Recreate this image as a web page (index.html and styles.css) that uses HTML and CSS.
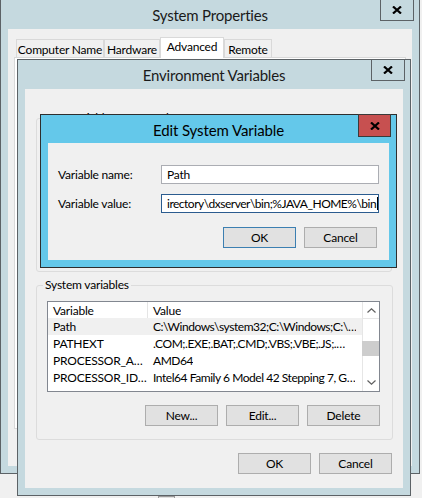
FILE: index.html
```html
<!DOCTYPE html>
<html>
<head>
<meta charset="utf-8">
<title>System Properties - Edit System Variable</title>
<link rel="stylesheet" href="styles.css">
</head>
<body>
<div class="desk">
  <div class="peek-btn"></div>

  <section class="win sysprops">
    <header class="titlebar">
      <span class="title">System Properties</span>
      <span class="close">
        <svg width="10" height="8" viewBox="0 0 10 8"><path d="M1 0.5 L9 7.5 M9 0.5 L1 7.5" stroke="#000" stroke-width="2.2" fill="none"/></svg>
      </span>
    </header>
    <div class="client sp-client">
      <div class="tabs">
        <span class="tab t-cn">Computer Name</span>
        <span class="tab t-hw">Hardware</span>
        <span class="tab t-adv sel">Advanced</span>
        <span class="tab t-rm">Remote</span>
      </div>
      <div class="tabpanel"></div>
    </div>
  </section>

  <section class="win env">
    <header class="titlebar">
      <span class="title">Environment Variables</span>
      <span class="close">
        <svg width="10" height="8" viewBox="0 0 10 8"><path d="M1 0.5 L9 7.5 M9 0.5 L1 7.5" stroke="#000" stroke-width="2.2" fill="none"/></svg>
      </span>
    </header>
    <div class="client env-client">
      <fieldset class="group user-group">
        <legend>User variables for Moonlemon</legend>
        <div class="user-body"></div>
      </fieldset>
      <fieldset class="group sys-group">
        <legend>System variables</legend>
        <div class="listview">
          <div class="lv-table">
            <div class="lv-row lv-head"><span class="c1">Variable</span><span class="c2 hdiv">Value</span></div>
            <div class="lv-row hl"><span class="c1">Path</span><span class="c2">C:\Windows\system32;C:\Windows;C:\…</span></div>
            <div class="lv-row"><span class="c1">PATHEXT</span><span class="c2">.COM;.EXE;.BAT;.CMD;.VBS;.VBE;.JS;.…</span></div>
            <div class="lv-row"><span class="c1">PROCESSOR_A…</span><span class="c2">AMD64</span></div>
            <div class="lv-row"><span class="c1">PROCESSOR_ID…</span><span class="c2">Intel64 Family 6 Model 42 Stepping 7, G…</span></div>
          </div>
          <div class="vscroll">
            <div class="sb-btn sb-up">
              <svg width="9" height="5" viewBox="0 0 9 5"><path d="M0.5 4.5 L4.5 0.8 L8.5 4.5" stroke="#606060" stroke-width="1.2" fill="none"/></svg>
            </div>
            <div class="sb-track"><div class="sb-thumb"></div></div>
            <div class="sb-btn sb-down">
              <svg width="9" height="5" viewBox="0 0 9 5"><path d="M0.5 0.5 L4.5 4.2 L8.5 0.5" stroke="#606060" stroke-width="1.2" fill="none"/></svg>
            </div>
          </div>
        </div>
        <div class="btn-row">
          <span class="btn">New...</span>
          <span class="btn">Edit...</span>
          <span class="btn">Delete</span>
        </div>
      </fieldset>
      <div class="btn-row dlg-btns">
        <span class="btn">OK</span>
        <span class="btn">Cancel</span>
      </div>
    </div>
  </section>

  <section class="win edit">
    <header class="titlebar">
      <span class="title">Edit System Variable</span>
      <span class="close red">
        <svg width="10" height="8" viewBox="0 0 10 8"><path d="M1 0.5 L9 7.5 M9 0.5 L1 7.5" stroke="#000" stroke-width="2.2" fill="none"/></svg>
      </span>
    </header>
    <div class="client edit-client">
      <div class="form">
        <label class="lbl">Variable name:</label>
        <div class="field">Path</div>
        <label class="lbl">Variable value:</label>
        <div class="field focus"><span class="val">irectory\dxserver\bin;%JAVA_HOME%\bin</span><span class="caret"></span></div>
      </div>
      <div class="btn-row edit-btns">
        <span class="btn default">OK</span>
        <span class="btn">Cancel</span>
      </div>
    </div>
  </section>
</div>
</body>
</html>
```

FILE: styles.css
```css
html, body {
  margin: 0;
  padding: 0;
}
body {
  background: #f0f0f0;
  font-family: Lato, "Noto Sans", sans-serif;
  font-size: 12px;
  letter-spacing: -0.2px;
  color: #000;
}
.desk {
  position: relative;
  width: 422px;
  height: 498px;
  overflow: hidden;
}
.peek-btn {
  position: absolute;
  left: 158px;
  top: 496px;
  width: 17px;
  height: 6px;
  background: #e1e1e1;
  border: 1px solid #9a9a9a;
  box-sizing: border-box;
}

/* windows */
.win {
  position: absolute;
  box-sizing: border-box;
  border: 1px solid #5c6266;
  background: #c5d9df;
  padding: 0 7px 7px;
  display: flex;
  flex-direction: column;
}
.titlebar {
  position: relative;
  height: 29px;
  flex: none;
  display: flex;
  align-items: center;
  justify-content: center;
}
.title {
  font-size: 15px;
  color: #1a1a1a;
  padding-top: 1px;
  white-space: nowrap;
}
.close {
  position: absolute;
  top: 0;
  right: -2px;
  width: 34px;
  height: 21px;
  box-sizing: border-box;
  border: 1px solid #5c6266;
  border-top: none;
  display: flex;
  align-items: center;
  justify-content: center;
}
.client {
  flex: 1;
  background: #f0f0f0;
  position: relative;
  box-sizing: border-box;
}

/* System Properties */
.sysprops {
  left: 0;
  top: -1px;
  width: 420px;
  height: 475px;
}
.sp-client {
  padding: 8px 0 0 6px;
}
.tabs {
  display: flex;
  align-items: flex-end;
  height: 20px;
  padding-left: 2px;
  position: relative;
  z-index: 1;
}
.tab {
  box-sizing: border-box;
  height: 18px;
  border: 1px solid #d9d9d9;
  border-bottom: none;
  background: #f0f0f0;
  display: flex;
  align-items: center;
  justify-content: center;
  padding-top: 1px;
  white-space: nowrap;
}
.t-cn { width: 88px; }
.t-hw { width: 56px; }
.t-adv { width: 64px; }
.t-rm { width: 48px; }
.tab.sel {
  height: 21px;
  margin-bottom: -1px;
  background: #fff;
  padding-top: 0;
  padding-bottom: 3px;
}
.tabpanel {
  width: 392px;
  height: 372px;
  box-sizing: border-box;
  border: 1px solid #d9d9d9;
  background: #fff;
}

/* Environment Variables */
.env {
  left: 17px;
  top: 59px;
  width: 394px;
  height: 437px;
}
.env-client {
  padding: 22px 10px 0 11px;
  display: flex;
  flex-direction: column;
}
.group {
  margin: 0;
  padding: 0 12px 13px 10px;
  border: 1px solid #dcdcdc;
  border-radius: 3px;
  min-width: 0;
}
.group legend {
  padding: 0 2px;
  margin-left: -4px;
  line-height: 14px;
  height: 14px;
  color: #000;
  white-space: nowrap;
}
.user-group {
  margin-right: 1px;
  padding-bottom: 0;
}
.user-group legend {
  margin-top: 1px;
}
.user-body {
  height: 146px;
}
.sys-group {
  margin-top: 6px;
  padding-top: 9px;
}
.listview {
  height: 91px;
  box-sizing: border-box;
  border: 1px solid #828790;
  background: #fff;
  display: flex;
}
.lv-table {
  flex: 1;
  min-width: 0;
  display: flex;
  flex-direction: column;
}
.lv-row {
  height: 17px;
  display: flex;
  align-items: center;
  white-space: nowrap;
  overflow: hidden;
}
.lv-head {
  height: 16px;
}
.lv-row.hl {
  background: #f0f0f0;
}
.c1 {
  width: 99px;
  box-sizing: border-box;
  padding-left: 5px;
  flex: none;
  overflow: hidden;
}
.c2 {
  padding-left: 6px;
  height: 100%;
  display: flex;
  align-items: center;
  letter-spacing: -0.45px;
  overflow: hidden;
  min-width: 0;
}
.hdiv {
  border-left: 1px solid #e5e5e5;
  padding-left: 5px;
  letter-spacing: -0.2px;
}
.vscroll {
  width: 17px;
  flex: none;
  display: flex;
  flex-direction: column;
  border-left: 1px solid #e6e6e6;
  box-sizing: border-box;
}
.sb-btn {
  height: 17px;
  flex: none;
  display: flex;
  align-items: center;
  justify-content: center;
}
.sb-up {
  border-bottom: 1px solid #e6e6e6;
  height: 16px;
}
.sb-track {
  flex: 1;
  padding-top: 22px;
}
.sb-thumb {
  height: 15px;
  background: #cdcdcd;
  margin-left: -1px;
}
.btn-row {
  display: flex;
  justify-content: flex-end;
  gap: 8px;
}
.sys-group .btn-row {
  margin-top: 13px;
}
.btn {
  width: 73px;
  height: 21px;
  box-sizing: border-box;
  background: #e1e1e1;
  border: 1px solid #adadad;
  display: flex;
  align-items: center;
  justify-content: center;
}
.dlg-btns {
  margin-top: 13px;
  margin-right: 1px;
}

/* Edit System Variable */
.edit {
  left: 40px;
  top: 114px;
  width: 357px;
  height: 154px;
  background: #64c8ea;
  border-color: #2e2e2e;
}
.edit .titlebar {
  height: 28px;
}
.edit .title {
  font-size: 15px;
  letter-spacing: -0.1px;
  color: #000;
}
.close.red {
  top: -1px;
  height: 23px;
  width: 33px;
  background: #c75050;
  border: 1px solid #3a3a3a;
}
.edit-client {
  padding: 22px 10px 0 10px;
}
.form {
  display: grid;
  grid-template-columns: 103px 218px;
  grid-auto-rows: 19px;
  row-gap: 10px;
  align-items: center;
}
.field {
  height: 19px;
  box-sizing: border-box;
  border: 1px solid #abadb3;
  background: #fff;
  padding-left: 5px;
  display: flex;
  align-items: center;
  white-space: nowrap;
  overflow: hidden;
}
.field.focus {
  border-color: #2b5c8f;
}
.val {
  letter-spacing: -0.5px;
}
.caret {
  width: 1px;
  height: 13px;
  background: #000;
  margin-left: 1px;
  flex: none;
}
.edit-btns {
  margin-top: 14px;
  margin-right: 2px;
}
.btn.default {
  border-color: #3c7fb1;
}
```
